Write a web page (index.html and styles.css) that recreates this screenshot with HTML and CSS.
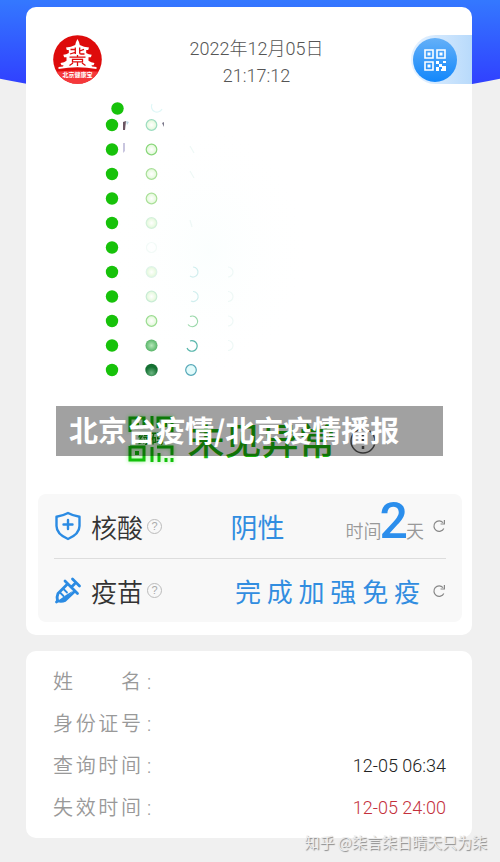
FILE: index.html
```html
<!DOCTYPE html>
<html lang="zh-CN">
<head>
<meta charset="utf-8">
<meta name="viewport" content="width=device-width, initial-scale=1">
<title>北京健康宝</title>
<link rel="stylesheet" href="styles.css">
</head>
<body>
<svg class="defs" aria-hidden="true">
  <symbol id="refresh" viewBox="0 0 14 14"><path d="M11.800 9.400A5.200 5.200 0 1 1 11 3.600M12.400 1v4H8.600" fill="none" stroke="currentColor" stroke-width="1.200"/></symbol>
</svg>
<div class="backdrop"></div>
<main class="page">
  <section class="card code-card">
    <header class="top">
      <svg class="logo" viewBox="0 0 49 49" role="img" aria-label="北京健康宝">
        <defs><clipPath id="disc"><circle cx="24.500" cy="24.500" r="24.300"/></clipPath></defs>
        <g clip-path="url(#disc)">
          <path fill="#de0b0b" d="M0 0h49v49H0z"/>
          <path fill="#f5383b" d="M0 37Q24.500 34 49 37V49H0z"/>
        </g>
        <path fill="#fff" d="M24.500 4l1.500 3 .8 3q4 2.300 9.200 2.500l-.8 2.500h-2v3q2.500 1.600 5.500 1.700l-.8 2.500h-2.400v3.600q2.500 2 6 2.200l-1 2.300h-2l.5 1.200 4.500.6v1.900Q24.500 30.500 5.500 34v-1.900l4.500-.6.500-1.200h-2L7.500 28q4-.4 6-2.200v-3.600h-2.400l-.8-2.500q3-.1 5.500-1.700v-3h-2l-.8-2.500q5.200-.2 9.200-2.500l.8-3z"/>
        <g fill="none" stroke="#de0b0b" stroke-width="1.300"><path d="M22.300 12.500v6.500M17.500 14.500h4.500M17 19l5.300-1.700M26.700 12.500v5.500q0 1 1.300 1h3.500M26.700 16l4.300-1.700M24.500 20v2M16.500 22.200h16M19.500 24.300h10v2.500h-10zM24.500 27v4M20 28l-3.500 2.500M29 28l3.500 2.500"/></g>
        <text class="logo-name" x="24.500" y="42" text-anchor="middle">北京健康宝</text>
      </svg>
      <div class="clock"><div>2022年12月05日</div><div>21:17:12</div></div>
      <button class="scan" type="button" aria-label="扫码">
        <svg viewBox="0 0 44 44" aria-hidden="true">
          <g fill="none" stroke="#fff" stroke-width="1.600"><path d="M12 12h8v8h-8zM24 12h8v8h-8zM12 24h8v8h-8z"/></g>
          <path fill="#fff" d="M14.500 14.500h3v3h-3zM26.500 14.500h3v3h-3zM14.500 26.500h3v3h-3zM23 23h3v3h-3zM26 26h3v3h-3zM30 23h3v2h-3zM23 29h3v4h-3zM29 28h4v5h-5v-2h1z"/>
        </svg>
      </button>
    </header>

    <svg class="dots" viewBox="0 0 446 294" aria-hidden="true">
      <defs>
        <radialGradient id="haze"><stop stop-color="#f8fefd" stop-opacity=".6"/><stop offset="1" stop-color="#fff" stop-opacity="0"/></radialGradient>
        <radialGradient id="deep" cy=".75"><stop stop-color="#6db783"/><stop offset="1" stop-color="#147032"/></radialGradient>
        <radialGradient id="mid"><stop stop-color="#b5e8b9"/><stop offset="1" stop-color="#58b568"/></radialGradient>
        <radialGradient id="pale"><stop stop-color="#fff"/><stop offset="1" stop-color="#e2f8d8"/></radialGradient>
      </defs>
      <path fill="url(#haze)" d="M78 20h210v270H78z"/>
      <g fill="#17c20a">
        <circle cx="91.500" cy="12.500" r="6.200"/>
        <circle cx="86" cy="29" r="6.200"/><circle cx="86" cy="53.500" r="6.200"/><circle cx="86" cy="78" r="6.200"/>
        <circle cx="86" cy="102.500" r="6.200"/><circle cx="86" cy="127" r="6.200"/><circle cx="86" cy="151.500" r="6.200"/>
        <circle cx="86" cy="176" r="6.200"/><circle cx="86" cy="200.500" r="6.200"/><circle cx="86" cy="225" r="6.200"/>
        <circle cx="86" cy="249.500" r="6.200"/><circle cx="86" cy="274" r="6.200"/>
      </g>
      <path fill="#6b5663" d="M97 26l3-1-1 9h-2z"/><path fill="#bcd7e4" d="M100 25l3 1-2 3z"/><path fill="#c9c6df" d="M97 47h2v8l-2 2z"/><path fill="#7b788b" d="M136 27l2-1v5z"/>
      <g fill="url(#pale)" stroke-width="1.200">
        <circle cx="125.500" cy="29" r="5.300" stroke="#9cdcc0"/>
        <circle cx="125.500" cy="53.500" r="5.300" stroke="#8ad77c"/>
        <circle cx="125.500" cy="78" r="5.300" stroke="#a8df98"/>
        <circle cx="125.500" cy="102.500" r="5.300" stroke="#abe09a"/>
        <circle cx="125.500" cy="127" r="5.300" stroke="#d3f0da"/>
        <circle cx="125.500" cy="176" r="5.300" stroke="#def3e8"/>
        <circle cx="125.500" cy="200.500" r="5.300" stroke="#c9ecd5"/>
        <circle cx="125.500" cy="225" r="5.300" stroke="#9bdc91"/>
      </g>
      <circle cx="125.500" cy="249.500" r="6" fill="url(#mid)"/><circle cx="125.500" cy="274" r="6.200" fill="url(#deep)"/>
      <g fill="none" stroke-width="1.200">
        <circle cx="125.500" cy="151.500" r="5" stroke="#f2faf7"/>
        <path d="M126 8a5 5 0 0 0 10 5" stroke="#dff7f7"/>
        <path d="M167 171a5 5 0 1 1-3 9M167 195.500a5 5 0 1 1-2 9.500" stroke="#d0eeee"/>
        <path d="M164 220.500a5.300 5.300 0 1 1-2 8" stroke="#9ad8aa"/>
        <path d="M164 245a5.300 5.300 0 1 1-3 7" stroke="#56b5aa"/>
        <circle cx="165" cy="274" r="5.300" stroke="#55a8b8" fill="#e3fbfb"/>
        <g stroke="#eef8f6"><path d="M202 171a5 5 0 1 1 0 10M202 195.500a5 5 0 1 1 0 10M202 220a5 5 0 1 1 0 10M202 244.500a5 5 0 1 1 0 10M164 50l4 7M164 75l4 7M164 124l2 7"/></g>
      </g>
    </svg>

    <div class="status">
      <svg class="status-code" viewBox="0 0 46 46" role="img" aria-label="绿码">
        <g fill="none" stroke="#12c00a" stroke-width="3"><path d="M2 16V2h14v10M30 12V2h14v14M2 30v14h14V31H2M24 0v10M24 31v15M29 31h15v8M31 37v9M38 42v4M44 42v4"/></g>
        <path fill="#12c00a" d="M7 7h4v4H7zM35 7h4v4h-4zM7 35h4v4H7z"/>
        <text class="status-code-name" x="23" y="27" text-anchor="middle">绿码</text>
      </svg>
      <h1 class="status-text">未见异常</h1>
      <button class="info" type="button" aria-label="说明">
        <svg viewBox="0 0 26 26" aria-hidden="true"><circle cx="13" cy="13" r="12" fill="none" stroke="#555" stroke-width="1.500"/><path d="M13 6v9M13 18v3" stroke="#555" stroke-width="2.500"/></svg>
      </button>
      <div class="banner">北京台疫情/北京疫情播报</div>
    </div>

    <div class="panel">
      <div class="record">
        <div class="record-name">
          <svg class="icon" viewBox="0 0 28 30" fill="none" stroke="#2b8be3" stroke-width="2.400" stroke-linejoin="round" stroke-linecap="round" aria-hidden="true"><path d="M14 2Q19 4.800 25.500 5.700V15q0 8-11.500 13Q2.500 23 2.500 15V5.700Q9 4.800 14 2zM14 9v9M9.500 13.500h9"/></svg>
          <span>核酸</span><button class="help" type="button" aria-label="核酸说明">?</button>
        </div>
        <strong class="value">阴性</strong>
        <div class="days"><span>时间</span><b>2</b><span>天</span></div>
        <button class="refresh" type="button" aria-label="刷新核酸"><svg aria-hidden="true"><use href="#refresh"/></svg></button>
      </div>
      <div class="record">
        <div class="record-name">
          <svg class="icon" viewBox="0 0 28 30" fill="none" stroke="#2b8be3" stroke-width="2.800" stroke-linejoin="round" stroke-linecap="round" aria-hidden="true"><path d="M11 5L23.500 17.500M18.500 3l7 7M20.500 8l-3 3"/><path d="M13 8.500L4 17.500q-1.500 3-.5 7.500 4.500 1 7.500-.5L20.500 15.500M4 24.500L2.500 26"/><path d="M9.500 13l3.500 3.500M6.500 17l3 3" stroke-width="1.800"/><path d="M12 19l6.500-4-7 9H5z" fill="#2b8be3" stroke="none"/></svg>
          <span>疫苗</span><button class="help" type="button" aria-label="疫苗说明">?</button>
        </div>
        <strong class="value value-end">完 成 加 强 免 疫</strong>
        <button class="refresh" type="button" aria-label="刷新疫苗"><svg aria-hidden="true"><use href="#refresh"/></svg></button>
      </div>
    </div>
  </section>

  <dl class="card details">
    <div class="detail"><dt><span class="spread">姓名</span>:</dt><dd></dd></div>
    <div class="detail"><dt><span class="spread">身份证号</span>:</dt><dd></dd></div>
    <div class="detail"><dt><span class="spread">查询时间</span>:</dt><dd>12-05 06:34</dd></div>
    <div class="detail expired"><dt><span class="spread">失效时间</span>:</dt><dd>12-05 24:00</dd></div>
  </dl>
  <div class="watermark">知乎 @柒言柒日晴天只为柒</div>
</main>
</body>
</html>
```
FILE: styles.css
```css
* { box-sizing: border-box; }
body {
  margin: 0;
  background: #f0f0f0;
  color: #333;
  font-family: Roboto, "Noto Sans CJK SC", sans-serif;
  font-weight: 350;
}
button { padding: 0; border: 0; background: none; font: inherit; color: inherit; }
svg { display: block; }
.defs { position: absolute; width: 0; height: 0; }
.backdrop {
  position: absolute;
  top: 0;
  left: 0;
  right: 0;
  height: 101px;
  background: linear-gradient(#3478ff, #3040ff 84%);
  clip-path: ellipse(80% 100% at 50% 0);
}
.page { position: relative; padding: 7px 28px 25px 26px; }
.card { background: #fff; border-radius: 10px; }
.code-card { padding: 28px 0 13px; }

.top { display: flex; justify-content: space-between; align-items: flex-start; padding-left: 27px; }
.logo { width: 49px; height: 49px; }
.logo-name { font: 700 6px "Noto Sans CJK SC", sans-serif; fill: #fff; }
.clock { font-size: 18px; line-height: 27px; font-weight: 300; text-align: center; color: #555; }
.scan {
  display: flex;
  align-items: center;
  width: 61px;
  height: 49px;
  padding-left: 2px;
  border-radius: 25px 0 0 25px;
  background: linear-gradient(90deg, #e6f2ff, #b8dafb);
}
.scan svg {
  width: 44px;
  height: 44px;
  border-radius: 50%;
  background: linear-gradient(#64b0f8, #1287fb);
}

.dots { width: 100%; margin-top: 7px; }
.status { position: relative; display: flex; align-items: center; justify-content: center; gap: 14px; height: 50px; margin: 16px 29px 0 30px; padding-left: 4px; }
.status-code { width: 46px; height: 46px; margin-top: 16px; filter: drop-shadow(0 0 2px #8cf284); }
.status-code-name { font: 700 13px "Noto Sans CJK SC", sans-serif; fill: #12a00a; }
.status-text { margin: 16px 0 0; font: 500 37px/50px "Noto Sans CJK SC", sans-serif; color: #1cb50e; }
.info { width: 26px; margin-top: 20px; }
.banner {
  position: absolute;
  inset: 0;
  padding-left: 13px;
  background: rgba(0, 0, 0, .37);
  color: #fff;
  font: 700 29px/46px "Noto Sans CJK SC", sans-serif;
  white-space: nowrap;
}

.panel { margin: 38px 10px 0 12px; padding: 0 16px; border-radius: 8px; background: #f8f8f8; }
.record { display: flex; align-items: center; height: 64px; }
.record + .record { border-top: 1px solid #ddd; }
.record-name { display: flex; align-items: center; flex: 0 0 45%; gap: 9px; font-size: 26px; }
.icon { width: 28px; height: 30px; }
.help {
  width: 15px;
  height: 15px;
  margin-left: -5px;
  border: 1px solid #bbb;
  border-radius: 50%;
  font: 11px/13px "Liberation Sans", sans-serif;
  color: #aaa;
}
.value { font-size: 27px; font-weight: 400; color: #318de0; white-space: nowrap; }
.value-end { margin-left: auto; font: 400 26px "Noto Sans CJK SC", sans-serif; }
.record-name:has(+ .value-end) { flex-basis: auto; }
.days { display: flex; align-items: baseline; margin-left: auto; font-size: 18px; line-height: 56px; color: #999; }
.days b { margin: 0 -2px; font-size: 50px; font-weight: 500; color: #2b8eec; }
.refresh { width: 14px; margin-left: 12px; color: #888; }
.refresh svg { width: 14px; height: 14px; }
.days + .refresh { margin-left: 8px; }

.details { margin: 16px 0 0; padding: 10px 26px 9px 27px; }
.detail { display: flex; justify-content: space-between; align-items: center; height: 42px; font-size: 20px; line-height: 28px; }
.detail dt { display: flex; gap: 6px; color: #999; }
.detail dd { margin: 0; font-size: 18px; font-weight: 300; color: #222; }
.spread { width: 88px; text-align-last: justify; text-justify: inter-character; }
.detail.expired dd { color: #c4303c; }
.watermark {
  position: absolute;
  right: 13px;
  bottom: 10px;
  font: 400 15px/22px "Noto Sans CJK SC", sans-serif;
  color: #eee;
  text-shadow: 1px 1px 1px #888;
}
```
